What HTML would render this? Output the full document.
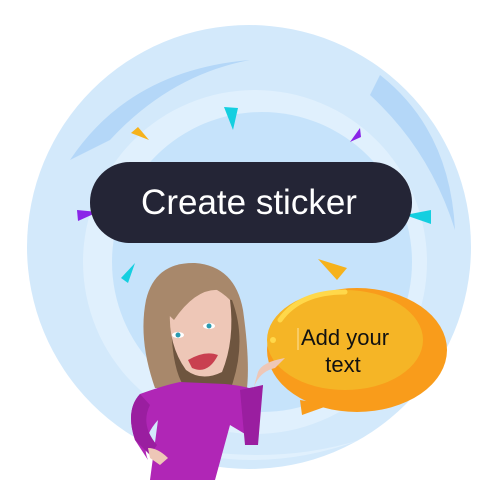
<!DOCTYPE html>
<html><head><meta charset="utf-8"><style>
html,body{margin:0;padding:0;background:#fff;width:490px;height:490px;overflow:hidden}
svg{display:block}
</style></head><body>
<svg width="490" height="490" viewBox="0 0 490 490" xmlns="http://www.w3.org/2000/svg">
<circle cx="249" cy="247" r="222" fill="#d3e9fb"/>
<path d="M70 160 Q130 70 250 60 Q170 75 110 140Z" fill="#b4d7f8"/>
<path d="M380 75 Q450 130 455 230 Q430 150 370 95Z" fill="#b4d7f8"/>
<circle cx="255" cy="262" r="172" fill="#e0f0fd"/>
<circle cx="262" cy="262" r="150" fill="#c6e3fb"/>
<path d="M100 250 Q110 370 230 430 Q130 400 95 300Z" fill="#e0f0fd"/>
<path d="M150 440 Q250 480 360 440 Q260 470 150 440Z" fill="#e0f0fd"/>
<!-- confetti -->
<polygon points="224,107 238,108 233,130" fill="#14cfe0"/>
<polygon points="131,133 138,127 149,140" fill="#f6b21b"/>
<polygon points="350,142 360,128 361,137" fill="#8a25e8"/>
<polygon points="77,210 98,212 78,221" fill="#8a25e8"/>
<polygon points="405,215 431,210 431,224" fill="#14cfe0"/>
<polygon points="121,278 135,263 128,283" fill="#14cfe0"/>
<polygon points="318,259 347,268 337,280" fill="#f6b21b"/>
<!-- pill -->
<rect x="90" y="162" width="322" height="81" rx="40" fill="#242536"/>
<text x="249" y="214" font-family="Liberation Sans, sans-serif" font-size="35" fill="#fff" text-anchor="middle">Create sticker</text>
<!-- bubble -->
<path d="M300 400 L302 415 L330 405Z" fill="#f99c1b"/>
<ellipse cx="357" cy="350" rx="90" ry="62" fill="#f99c1b"/>
<ellipse cx="345" cy="340" rx="78" ry="50" fill="#f5b526"/>
<path d="M280 320 Q300 292 345 292" stroke="#ffd84a" stroke-width="5" fill="none" stroke-linecap="round"/>
<circle cx="273" cy="340" r="3" fill="#ffd84a"/>
<line x1="298" y1="328" x2="298" y2="350" stroke="#fde3a0" stroke-width="1"/>
<text x="345" y="345" font-family="Liberation Sans, sans-serif" font-size="22" fill="#111" text-anchor="middle">Add your</text>
<text x="343" y="372" font-family="Liberation Sans, sans-serif" font-size="22" fill="#111" text-anchor="middle">text</text>
<!-- person -->
<path d="M146 300 Q155 262 195 263 Q235 266 243 310 Q250 360 247 388 L155 388 Q138 340 146 300Z" fill="#a8886b"/>
<path d="M172 290 Q168 360 183 385 L232 385 Q247 340 232 300Z" fill="#6e553f"/>
<path d="M172 290 Q205 275 230 300 Q235 340 222 372 Q202 382 186 370 Q168 345 170 310Z" fill="#eec7b7"/>
<path d="M158 305 Q190 255 228 292 Q200 282 174 320Z" fill="#a8886b"/>
<ellipse cx="178" cy="335" rx="6" ry="3" fill="#fff"/><circle cx="178" cy="335" r="2.5" fill="#2a9ab0"/>
<ellipse cx="209" cy="326" rx="6" ry="3" fill="#fff"/><circle cx="209" cy="326" r="2.5" fill="#2a9ab0"/>
<path d="M188 360 Q205 350 218 355 Q208 375 192 368Z" fill="#c94050"/>
<path d="M140 394 Q165 385 180 382 L225 384 Q245 386 255 390 L263 385 L255 440 L230 425 L215 480 L150 480 L158 420 Q140 440 148 460 L135 440 Q125 410 140 394Z" fill="#b026b6"/>
<path d="M240 390 L263 385 L258 445 L245 445Z" fill="#9a1ea0"/>
<path d="M140 394 Q125 410 135 440 L150 455 L157 445 Q140 425 150 405Z" fill="#9a1ea0"/>
<path d="M253 390 Q258 372 275 368 L285 358 Q262 362 258 372Z" fill="#eec7b7"/>
<path d="M148 448 Q158 448 168 458 L160 465 L150 458Z" fill="#eec7b7"/>
</svg>
</body></html>
